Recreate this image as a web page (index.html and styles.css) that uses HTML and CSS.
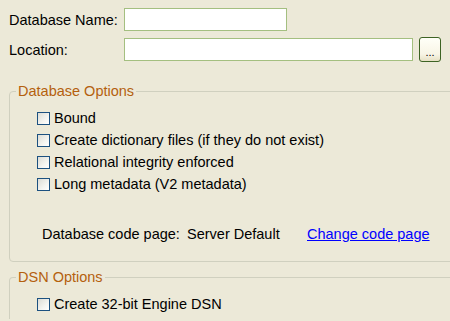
FILE: index.html
```html
<!DOCTYPE html>
<html lang="en">
<head>
  <meta charset="UTF-8" />
  <title>Create Database</title>
  <link rel="stylesheet" href="styles.css">
</head>
<body>
  <div class="dialog">
    <div class="field-row">
      <label class="field-label" for="dbName">Database Name:</label>
      <input type="text" id="dbName" class="text-input name-input">
    </div>
    <div class="field-row">
      <label class="field-label" for="dbLocation">Location:</label>
      <input type="text" id="dbLocation" class="text-input location-input">
      <button type="button" class="browse-btn">...</button>
    </div>

    <fieldset class="group db-options">
      <legend>Database Options</legend>
      <label class="check-row"><input type="checkbox" class="check"> Bound</label>
      <label class="check-row"><input type="checkbox" class="check"> Create dictionary files (if they do not exist)</label>
      <label class="check-row"><input type="checkbox" class="check"> Relational integrity enforced</label>
      <label class="check-row"><input type="checkbox" class="check"> Long metadata (V2 metadata)</label>

      <div class="codepage-row">
        <span class="codepage-label">Database code page:</span>
        <span class="codepage-value">Server Default</span>
        <a href="#" class="codepage-link">Change code page</a>
      </div>
    </fieldset>

    <fieldset class="group dsn-options">
      <legend>DSN Options</legend>
      <label class="check-row"><input type="checkbox" class="check"> Create 32-bit Engine DSN</label>
    </fieldset>
  </div>
</body>
</html>
```

FILE: styles.css
```css
/* Windows XP (olive) style dialog */
body {
  margin: 0;
  width: 450px;
  height: 321px;
  overflow: hidden;
  background: #ece9d8;
  font-family: "Liberation Sans", Arial, sans-serif;
  font-size: 14.5px;
  color: #000;
}

.dialog {
  padding: 8px 0 0 9px;
}

.field-row {
  display: flex;
  align-items: center;
  height: 23px;
  margin-bottom: 7px;
}

.field-label {
  width: 115px;
}

.text-input {
  box-sizing: border-box;
  height: 23px;
  margin: 0;
  border: 1px solid #a4bf80;
  background: #fff;
  font: inherit;
  padding: 0 3px;
}

.name-input {
  width: 163px;
}

.location-input {
  width: 289px;
}

.browse-btn {
  box-sizing: border-box;
  width: 22px;
  height: 25px;
  margin: 0 0 0 6px;
  padding: 0 0 3px;
  border: 1px solid #3d6324;
  border-radius: 3px;
  background: linear-gradient(to bottom, #fffff8 0%, #f8f5e6 70%, #e6e0c4 100%);
  font-family: "Liberation Sans", Arial, sans-serif;
  font-size: 11px;
  line-height: 1;
  color: #000;
  display: flex;
  align-items: flex-end;
  justify-content: center;
}

.group {
  margin: 0 -20px 0 0;
  padding: 8px 0 0 27px;
  border: 1px solid #d0d0bf;
  border-radius: 4px;
  min-width: 0;
}

.group legend {
  margin-left: -21px;
  padding: 0 2px;
  line-height: 15px;
  color: #b4600e;
}

.db-options {
  margin-top: 23px;
  padding-bottom: 16px;
}

.dsn-options {
  margin-top: 8px;
  height: 40px;
  border-bottom-width: 0;
  border-bottom-left-radius: 0;
}

.check-row {
  display: flex;
  align-items: center;
  height: 22px;
  gap: 4px;
}

.check {
  appearance: none;
  -webkit-appearance: none;
  box-sizing: border-box;
  width: 13px;
  height: 13px;
  margin: 0;
  border: 1px solid #1c5180;
  background: linear-gradient(135deg, #dcdcd5 0%, #f4f4f0 60%, #ffffff 100%);
}

.codepage-row {
  display: flex;
  align-items: center;
  height: 22px;
  margin-top: 28px;
  padding-left: 5px;
}

.codepage-label {
  width: 145px;
}

.codepage-value {
  width: 120px;
}

.codepage-link {
  color: #0000ff;
  text-decoration: underline;
}
```
